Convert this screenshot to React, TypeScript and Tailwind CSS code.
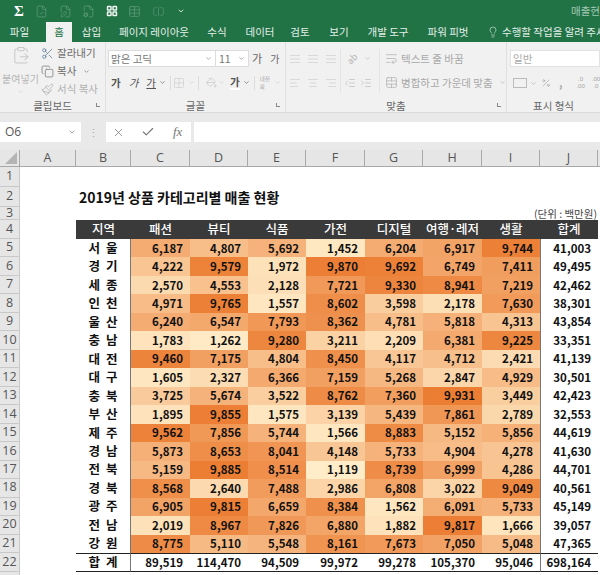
import { Check, ChevronDown, ClipboardPaste, Copy, FileCheck, FilePen, FileCog, Grid2x2, Indent, Lightbulb, Outdent, PaintBucket, Paintbrush, Percent, Scissors, TableCellsMerge, WrapText, X, AlignCenter, AlignLeft, AlignRight, LayoutGrid, Table, SquareSplitHorizontal, AlignJustify } from "lucide-react";

const KR = "font-['Noto_Sans_CJK_KR','Noto_Sans',sans-serif]";

const tabs = ["파일", "홈", "삽입", "페이지 레이아웃", "수식", "데이터", "검토", "보기", "개발 도구", "파워 피벗"];
const tabWidths = [39, 26, 39, 86, 40, 46, 34, 44, 54, 66];

const columns = ["A", "B", "C", "D", "E", "F", "G", "H", "I", "J"];
const headers = ["지역", "패션", "뷰티", "식품", "가전", "디지털", "여행·레저", "생활", "합계"];

const rows: [string, number[], number][] = [
  ["서 울", [6187, 4807, 5692, 1452, 6204, 6917, 9744], 41003],
  ["경 기", [4222, 9579, 1972, 9870, 9692, 6749, 7411], 49495],
  ["세 종", [2570, 4553, 2128, 7721, 9330, 8941, 7219], 42462],
  ["인 천", [4971, 9765, 1557, 8602, 3598, 2178, 7630], 38301],
  ["울 산", [6240, 6547, 7793, 8362, 4781, 5818, 4313], 43854],
  ["충 남", [1783, 1262, 9280, 3211, 2209, 6381, 9225], 33351],
  ["대 전", [9460, 7175, 4804, 8450, 4117, 4712, 2421], 41139],
  ["대 구", [1605, 2327, 6366, 7159, 5268, 2847, 4929], 30501],
  ["충 북", [3725, 5674, 3522, 8762, 7360, 9931, 3449], 42423],
  ["부 산", [1895, 9855, 1575, 3139, 5439, 7861, 2789], 32553],
  ["제 주", [9562, 7856, 5744, 1566, 8883, 5152, 5856], 44619],
  ["경 남", [5873, 8653, 8041, 4148, 5733, 4904, 4278], 41630],
  ["전 북", [5159, 9885, 8514, 1119, 8739, 6999, 4286], 44701],
  ["경 북", [8568, 2640, 7488, 2986, 6808, 3022, 9049], 40561],
  ["광 주", [6905, 9815, 6659, 8384, 1562, 6091, 5733], 45149],
  ["전 남", [2019, 8967, 7826, 6880, 1882, 9817, 1666], 39057],
  ["강 원", [8775, 5110, 5548, 8161, 7673, 7050, 5048], 47365],
];
const totals = [89519, 114470, 94509, 99972, 99278, 105370, 95046, 698164];

// colour scale: pale cream at the low end, orange at the high end
function heat(v: number) {
  const t = Math.min(1, Math.max(0, (v - 1100) / 8800));
  const r = Math.round(255 + (236 - 255) * t);
  const g = Math.round(236 + (126 - 236) * t);
  const b = Math.round(200 + (52 - 200) * t);
  return `rgb(${r},${g},${b})`;
}

const fmt = (n: number) => n.toLocaleString("en-US");

function RowHead({ n }: { n: number }) {
  return (
    <div className="flex items-center justify-center bg-[#e6e6e6] border-r border-b border-[#c8c8c8] text-[12.5px] text-[#555] font-['Open_Sans',sans-serif]">
      {n}
    </div>
  );
}

function TitleBar() {
  const cls = "w-[13px] h-[13px] shrink-0 text-[#5f9a7a]";
  return (
    <div className="h-[22px] bg-[#217346] flex items-center text-white">
      <span className="ml-[14px] w-[10px] text-[15px] font-bold font-['Liberation_Serif',serif] leading-none">Σ</span>
      <FileCheck className={`${cls} ml-[11px]`} strokeWidth={1.4} />
      <FilePen className={`${cls} ml-[11px]`} strokeWidth={1.4} />
      <FileCog className={`${cls} ml-[10px]`} strokeWidth={1.4} />
      <LayoutGrid className="w-[12px] h-[12px] shrink-0 ml-[11px] text-[#eef5f1]" strokeWidth={3} />
      <Table className={`${cls} ml-[10px]`} strokeWidth={1.4} />
      <SquareSplitHorizontal className={`${cls} ml-[11px]`} strokeWidth={1.2} />
      <ChevronDown className="w-[8px] h-[8px] shrink-0 ml-[12px] text-[#cfe0d6]" strokeWidth={3} />
      <span className={`ml-auto text-[10.5px] text-[#a5c9b5] whitespace-nowrap ${KR}`}>매출현</span>
    </div>
  );
}

function TabBar() {
  return (
    <div className={`h-[20px] bg-[#217346] flex items-end text-[10.5px] text-[#e4efe9] overflow-hidden ${KR}`}>
      {tabs.map((t, i) => (
        <div
          key={t}
          style={{ width: tabWidths[i] }}
          className={`h-[20px] shrink-0 flex items-center justify-center whitespace-nowrap ${t === "홈" ? "bg-[#f1f1f1] text-[#217346] ml-[7px]" : ""}`}
        >
          {t}
        </div>
      ))}
      <div className="flex items-center ml-[6px] whitespace-nowrap h-[20px] shrink-0">
        <Lightbulb className="w-[12px] h-[12px] mr-[3px]" strokeWidth={1.2} />
        수행할 작업을 알려 주세
      </div>
    </div>
  );
}

function GroupLabel({ children, launcher }: { children: string; launcher?: boolean }) {
  return (
    <div className={`h-[18px] relative flex items-end justify-center leading-[13px] text-[10.5px] text-[#666] ${KR}`}>
      {children}
      {launcher && <span className="absolute right-[5px] top-[9px] w-[4px] h-[4px] border-l border-b border-[#888]" />}
    </div>
  );
}

function Sep() {
  return <span className="block w-px h-[14px] bg-[#dcdcdc] shrink-0" />;
}

function Ribbon() {
  const chev = "w-[7px] h-[7px] shrink-0";
  return (
    <div className={`h-[71px] bg-[#f1f1f1] border-b border-[#dcdcdc] flex text-[#9a9a9a] text-[10.5px] overflow-hidden ${KR}`}>
      {/* clipboard */}
      <div className="w-[106px] shrink-0 border-r border-[#e0e0e0] flex flex-col">
        <div className="flex-1 flex min-h-0">
          <div className="w-[41px] shrink-0 flex flex-col items-center pt-[4px]">
            <ClipboardPaste className="w-[24px] h-[24px] text-[#c9c9c9]" strokeWidth={1.3} />
            <span className="text-[10px] leading-[14px] mt-[7px] text-[#b5b5b5] whitespace-nowrap">붙여넣기</span>
            <ChevronDown className="w-[7px] h-[7px] text-[#bbb] mt-[3px]" />
          </div>
          <div className="flex flex-col pt-[2px] text-[10.5px] leading-[18px]">
            <div className="flex items-center gap-[3px] text-[#6b6b6b] whitespace-nowrap">
              <Scissors className="w-[13px] h-[13px] text-[#5d7d99]" strokeWidth={1.4} />
              잘라내기
            </div>
            <div className="flex items-center gap-[3px] text-[#6b6b6b] whitespace-nowrap">
              <Copy className="w-[13px] h-[13px] text-[#777]" strokeWidth={1.4} />
              복사
              <ChevronDown className={`${chev} ml-[4px]`} />
            </div>
            <div className="flex items-center gap-[3px] text-[#b0b0b0] whitespace-nowrap">
              <Paintbrush className="w-[13px] h-[13px]" strokeWidth={1.4} />
              서식 복사
            </div>
          </div>
        </div>
        <GroupLabel launcher>클립보드</GroupLabel>
      </div>

      {/* font */}
      <div className="w-[180px] shrink-0 border-r border-[#e0e0e0] flex flex-col">
        <div className="flex-1 pt-[8px] pl-[2px] min-h-0">
          <div className="flex items-center h-[17px]">
            <div className="w-[108px] shrink-0 h-[17px] bg-white border border-[#dcdcdc] flex items-center justify-between pl-[2px] pr-[3px] text-[#777]">
              맑은 고딕
              <ChevronDown className={chev} />
            </div>
            <div className="w-[33px] shrink-0 h-[17px] bg-white border border-l-0 border-[#dcdcdc] flex items-center justify-between px-[3px] text-[#777]">
              11
              <ChevronDown className={chev} />
            </div>
            <span className="ml-[3px] text-[11px] text-[#666]">가</span>
            <span className="ml-[8px] text-[10px] text-[#666]">가</span>
          </div>
          <div className="flex items-center h-[17px] mt-[7px] text-[10.5px] text-[#555] whitespace-nowrap">
            <span className="ml-[3px] font-bold">가</span>
            <span className="ml-[8px] italic">가</span>
            <span className="ml-[8px] underline">가</span>
            <ChevronDown className={`${chev} ml-[3px]`} />
            <span className="ml-[4px]"><Sep /></span>
            <Grid2x2 className="w-[12px] h-[12px] ml-[2px] text-[#c2c2c2]" strokeWidth={1} />
            <ChevronDown className={`${chev} ml-[3px] text-[#ccc]`} />
            <span className="ml-[3px]"><Sep /></span>
            <PaintBucket className="w-[11px] h-[11px] ml-[7px] text-[#bbb]" strokeWidth={1.2} />
            <ChevronDown className={`${chev} ml-[1px] text-[#ccc]`} />
            <span className="ml-[5px] border-b-2 border-white leading-[13px] font-bold">가</span>
            <ChevronDown className={`${chev} ml-[3px]`} />
            <span className="ml-[4px]"><Sep /></span>
            <span className="ml-[5px] w-[11px] text-[5.5px] leading-[8px] text-[#aaa]">내천<br />짜</span>
            <ChevronDown className={`${chev} ml-[3px] text-[#ccc]`} />
          </div>
        </div>
        <GroupLabel launcher>글꼴</GroupLabel>
      </div>

      {/* alignment */}
      <div className="w-[221px] shrink-0 border-r border-[#e0e0e0] flex flex-col">
        <div className="flex-1 pt-[7px] flex min-h-0">
          <div className="w-[54px] shrink-0 grid grid-cols-3 grid-rows-2 gap-y-[5px] justify-items-center items-center h-[44px] text-[#c8c8c8]">
            <AlignJustify className="w-[12px] h-[12px]" strokeWidth={1.2} />
            <AlignJustify className="w-[12px] h-[12px]" strokeWidth={1.2} />
            <AlignJustify className="w-[12px] h-[12px]" strokeWidth={1.2} />
            <AlignLeft className="w-[12px] h-[12px]" strokeWidth={1.2} />
            <AlignCenter className="w-[12px] h-[12px]" strokeWidth={1.2} />
            <AlignRight className="w-[12px] h-[12px]" strokeWidth={1.2} />
          </div>
          <div className="w-[39px] shrink-0 border-l border-[#e4e4e4] h-[44px] flex flex-col gap-[5px] text-[#b5b5b5] pl-[3px]">
            <div className="h-[19px] flex items-center">
              <span className="text-[9px] leading-[12px] -rotate-45 ml-[3px]">ab</span>
              <ChevronDown className={`${chev} ml-[6px]`} />
            </div>
            <div className="h-[19px] flex items-center gap-[4px]">
              <Outdent className="w-[12px] h-[12px]" strokeWidth={1.2} />
              <Indent className="w-[12px] h-[12px]" strokeWidth={1.2} />
            </div>
          </div>
          <div className="pl-[5px] border-l border-[#e4e4e4] h-[44px] flex flex-col gap-[5px] text-[10.5px] text-[#a8a8a8] whitespace-nowrap">
            <div className="h-[19px] flex items-center gap-[3px]">
              <WrapText className="w-[13px] h-[13px]" strokeWidth={1.2} />
              텍스트 줄 바꿈
            </div>
            <div className="h-[19px] flex items-center gap-[3px]">
              <TableCellsMerge className="w-[13px] h-[13px]" strokeWidth={1.2} />
              병합하고 가운데 맞춤
              <ChevronDown className={`${chev} ml-[3px]`} />
            </div>
          </div>
        </div>
        <GroupLabel launcher>맞춤</GroupLabel>
      </div>

      {/* number */}
      <div className="flex-1 flex flex-col min-w-0">
        <div className="flex-1 pt-[8px] pl-[3px] min-h-0">
          <div className="w-[90px] h-[17px] bg-white border border-[#e2e2e2] flex items-center px-[2px] text-[#aaa]">일반</div>
          <div className="flex items-center mt-[9px] text-[#a5a5a5] whitespace-nowrap">
            <span className="w-[14px] h-[10px] shrink-0 border border-[#bbb] ml-[3px]" />
            <ChevronDown className={`${chev} ml-[3px]`} />
            <Percent className="w-[10px] h-[10px] shrink-0 ml-[4px]" strokeWidth={1.5} />
            <span className="ml-[8px] font-bold leading-none">,</span>
            <span className="ml-[14px] text-[6px] leading-[7px] text-center font-['Liberation_Sans',sans-serif]">.0<br />.00</span>
            <span className="ml-[7px] text-[6px] leading-[7px] text-center font-['Liberation_Sans',sans-serif]">.00<br />.0</span>
          </div>
        </div>
        <GroupLabel>표시 형식</GroupLabel>
      </div>
    </div>
  );
}

function FormulaBar() {
  return (
    <div className="h-[37px] bg-[#e9e9e9] flex items-start pt-[9px]">
      <div className="w-[81px] h-[20px] bg-white flex items-center justify-between pl-[5px] pr-[5px] text-[12px] text-[#555] font-['Open_Sans',sans-serif]">
        O6
        <ChevronDown className="w-[8px] h-[8px] text-[#777]" />
      </div>
      <div className="w-[25px] h-[20px] flex items-center justify-center text-[#aaa] text-[11px] leading-none">⋮</div>
      <div className="w-[85px] h-[20px] bg-white flex items-center text-[#777]">
        <X className="w-[13px] h-[13px] ml-[6px]" strokeWidth={1.4} />
        <Check className="w-[14px] h-[14px] ml-[16px]" strokeWidth={2} />
        <span className="ml-[18px] text-[13px] italic font-['Liberation_Serif',serif]">fx</span>
      </div>
      <div className="flex-1 h-[20px] bg-white ml-[3px]" />
    </div>
  );
}

function Sheet() {
  const num = `text-[11.5px] font-bold text-[#111] ${KR}`;
  const name = `flex items-center justify-center border-r border-[#777] text-[12.5px] font-bold text-[#111] [word-spacing:3px] ${KR}`;
  return (
    <div className="grid grid-cols-[20px_56px_55px_59px_58px_58px_59px_58px_59px_58px_58px_2px] grid-rows-[17px_20px_20px_13px_19px_repeat(17,18.47px)_19px_4px] bg-white">
      {/* column header row */}
      <div className="bg-[#e6e6e6] border-r border-b border-[#a8a8a8] relative overflow-hidden">
        <span className="absolute right-[2px] bottom-[2px] w-0 h-0 border-t-[12px] border-r-[12px] border-t-transparent border-r-[#b4b4b4]" />
      </div>
      {columns.map((c) => (
        <div key={c} className="bg-[#e6e6e6] border-r border-b border-[#a8a8a8] flex items-center justify-center text-[12.5px] text-[#555] font-['Open_Sans',sans-serif]">
          {c}
        </div>
      ))}
      <div className="bg-[#e6e6e6] border-b border-[#a8a8a8]" />

      {/* row 1 */}
      <RowHead n={1} />
      <div className="col-span-11" />

      {/* row 2 */}
      <RowHead n={2} />
      <div />
      <div className={`col-span-10 flex items-center pl-[3px] text-[14px] font-bold text-[#111] whitespace-nowrap ${KR}`}>
        2019년 상품 카테고리별 매출 현황
      </div>

      {/* row 3 */}
      <RowHead n={3} />
      <div className="col-span-9" />
      <div className={`col-span-2 flex items-center justify-end pr-[3px] text-[10.5px] text-[#444] whitespace-nowrap ${KR}`}>
        (단위 : 백만원)
      </div>

      {/* row 4 */}
      <RowHead n={4} />
      <div />
      {headers.map((h) => (
        <div key={h} className={`bg-[#3a3a3a] flex items-center justify-center text-[12.5px] font-medium text-white whitespace-nowrap ${KR}`}>
          {h}
        </div>
      ))}
      <div />

      {/* data rows */}
      {rows.map(([label, vals, total], i) => (
        <div key={label} className="contents">
          <RowHead n={i + 5} />
          <div />
          <div className={name}>{label}</div>
          {vals.map((v, j) => (
            <div key={j} style={{ backgroundColor: heat(v) }} className={`flex items-center justify-end pr-[7px] ${num}`}>
              {fmt(v)}
            </div>
          ))}
          <div className={`flex items-center justify-end pr-[7px] border-l border-[#777] ${num}`}>{fmt(total)}</div>
          <div />
        </div>
      ))}

      {/* total row */}
      <RowHead n={22} />
      <div />
      <div className={`${name} border-t border-b border-t-[#222] border-b-[#222]`}>합 계</div>
      {totals.map((v, j) => (
        <div key={j} className={`flex items-center justify-end border-t border-b border-[#222] pr-[7px] ${j === 7 ? "border-l border-l-[#777]" : ""} ${num}`}>
          {fmt(v)}
        </div>
      ))}
      <div />

      <div className="bg-[#e6e6e6] border-r border-[#c8c8c8]" />
    </div>
  );
}

export default function App() {
  return (
    <div className="w-[600px] h-[575px] overflow-hidden bg-white">
      <TitleBar />
      <TabBar />
      <Ribbon />
      <FormulaBar />
      <Sheet />
    </div>
  );
}
